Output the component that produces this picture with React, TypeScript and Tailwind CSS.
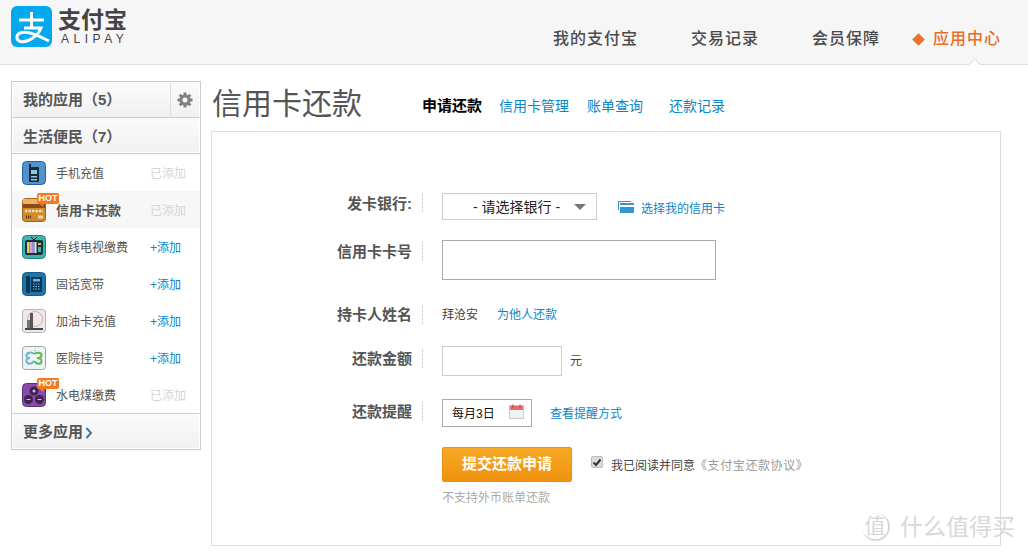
import React from "react";

const FONT = { fontFamily: '"Liberation Sans", "Noto Sans CJK SC", sans-serif' };

const navItems = ["我的支付宝", "交易记录", "会员保障"];

// sidebar app list: added = already on the user's list
const apps = [
  { name: "手机充值", added: true, icon: "phone" },
  { name: "信用卡还款", added: true, icon: "card", hot: true, active: true },
  { name: "有线电视缴费", added: false, icon: "tv" },
  { name: "固话宽带", added: false, icon: "tel" },
  { name: "加油卡充值", added: false, icon: "oil" },
  { name: "医院挂号", added: false, icon: "hospital" },
  { name: "水电煤缴费", added: true, icon: "water", hot: true },
];

const AlipayLogo = () => (
  <svg width="41" height="41" viewBox="0 0 41 41" className="shrink-0">
    <rect width="41" height="41" rx="6" fill="#04a8ee" />
    <path d="M8 14H33M20.500 6V22M13 22H30C27 30 17 37 9.500 35.500C4.500 34 4.500 28 11 26.500C18 25 28 30 38 35" fill="none" stroke="#fff" strokeWidth="3" />
  </svg>
);

const AppIcon = ({ kind }: { kind: string }) => {
  if (kind === "phone")
    return (
      <svg width="24" height="24" viewBox="0 0 24 24">
        <rect x="0.500" y="0.500" width="23" height="23" rx="4" fill="#4f94cf" stroke="#2c5f9a" />
        <rect x="7" y="3" width="2" height="4" fill="#1d2a3a" />
        <rect x="7" y="6" width="10" height="15" rx="1" fill="#1d2a3a" />
        <rect x="9" y="9" width="6" height="4" fill="#8fc6e6" />
        <rect x="9" y="15" width="6" height="1.500" fill="#8fc6e6" />
        <rect x="9" y="18" width="6" height="1.500" fill="#8fc6e6" />
      </svg>
    );
  if (kind === "card")
    return (
      <svg width="24" height="24" viewBox="0 0 24 24">
        <rect x="0.500" y="0.500" width="23" height="23" rx="3" fill="#d08a30" stroke="#a3651d" />
        <rect x="1" y="1" width="22" height="5" fill="#e8b565" />
        <rect x="1" y="6" width="22" height="4" fill="#8a4a1c" />
        <path d="M3 13H21" stroke="#f4dfae" strokeWidth="2.500" strokeDasharray="2.500 1" />
        <path d="M4 19H10" stroke="#5a2f10" strokeWidth="3" strokeDasharray="1 1" />
        <rect x="16" y="17.500" width="5" height="3" fill="#edd9a5" />
      </svg>
    );
  if (kind === "tv")
    return (
      <svg width="24" height="24" viewBox="0 0 24 24">
        <rect x="0.500" y="0.500" width="23" height="23" rx="4" fill="#3fb3b0" stroke="#1f7d80" />
        <path d="M9 2L12 5L15 2" fill="none" stroke="#123" strokeWidth="1" />
        <rect x="3" y="5" width="18" height="15" rx="2" fill="#17323a" />
        <rect x="5" y="7" width="2.500" height="11" fill="#c9e265" />
        <rect x="7.500" y="7" width="2.500" height="11" fill="#e59ac9" />
        <rect x="10" y="7" width="2.500" height="11" fill="#a58be0" />
        <rect x="12.500" y="7" width="2" height="11" fill="#e8e8e8" />
        <rect x="16" y="8" width="3" height="2" fill="#e0c14a" />
        <rect x="16" y="12" width="3" height="5" fill="#3fb3b0" />
      </svg>
    );
  if (kind === "tel")
    return (
      <svg width="24" height="24" viewBox="0 0 24 24">
        <rect x="0.500" y="0.500" width="23" height="23" rx="4" fill="#1f74a8" stroke="#165a86" />
        <rect x="4" y="4" width="4" height="17" rx="1" fill="#0f3554" />
        <rect x="9" y="5" width="11" height="15" fill="#0f3554" />
        <rect x="11" y="7" width="7" height="2.500" fill="#6db7de" />
        <path d="M11 12H18M11 14.500H18M11 17H18" stroke="#6db7de" strokeWidth="1.200" strokeDasharray="1.500 1" />
      </svg>
    );
  if (kind === "oil")
    return (
      <svg width="24" height="24" viewBox="0 0 24 24">
        <rect x="0.500" y="0.500" width="23" height="23" rx="3" fill="#f0e8e8" stroke="#a8b4be" />
        <circle cx="13" cy="10" r="7.500" fill="none" stroke="#d39a9a" strokeWidth="0.800" />
        <rect x="8" y="4" width="3" height="15" fill="#5a5454" />
        <rect x="5" y="11" width="3" height="8" fill="#77706f" />
        <rect x="3" y="19" width="18" height="2" fill="#4a4545" />
      </svg>
    );
  if (kind === "hospital")
    return (
      <svg width="24" height="24" viewBox="0 0 24 24">
        <rect x="0.500" y="0.500" width="23" height="23" rx="3" fill="#eef3f3" stroke="#9aa4ae" />
        <path d="M12 8C9 5 4 7 4.500 10.500C5 12 7 12 8 12C6 12 4 13 4.500 15.500C5.500 19 10 18 12 15" fill="none" stroke="#6fb3d8" strokeWidth="2" />
        <path d="M12 8C15 6 20 6 19.500 10C19 12 17 12 15 12C17 12 20 13 19.500 15.500C19 19 14 18 12 15" fill="none" stroke="#5cb85c" strokeWidth="2" />
        <circle cx="13" cy="4.500" r="1" fill="#9ccf9c" />
      </svg>
    );
  return (
    <svg width="24" height="24" viewBox="0 0 24 24">
      <rect x="0.500" y="0.500" width="23" height="23" rx="4" fill="#8a4aa8" stroke="#5e2d7a" />
      <circle cx="12" cy="8" r="4.500" fill="#3f2450" />
      <circle cx="6.500" cy="16.500" r="4.500" fill="#3f2450" />
      <circle cx="17.500" cy="16.500" r="4.500" fill="#3f2450" />
      <circle cx="12" cy="8" r="1.500" fill="#d9b8e6" />
      <path d="M4.500 16.500H8.500M15.500 16.500H19.500" stroke="#d9b8e6" strokeWidth="1.200" />
    </svg>
  );
};

const HotBadge = () => (
  <span className="absolute left-[15px] top-[-5px] flex h-[11px] w-[22px] items-center justify-center rounded-[2px] bg-[#f5791f] text-[9px] font-bold leading-none text-white">
    HOT
    <span className="absolute left-[2px] top-[10px] h-0 w-0 border-l-[4px] border-r-[1px] border-t-[4px] border-l-transparent border-r-transparent border-t-[#f5791f]" />
  </span>
);

const GearIcon = () => (
  <svg width="16" height="16" viewBox="0 0 16 16">
    <path d="M8 0.500V15.500M0.500 8H15.500M2.700 2.700L13.300 13.300M13.300 2.700L2.700 13.300" stroke="#808080" strokeWidth="3" />
    <circle cx="8" cy="8" r="5.500" fill="#808080" />
    <circle cx="8" cy="8" r="2.500" fill="#f5f5f5" />
  </svg>
);

const Sidebar = () => (
  <aside className="w-[190px] shrink-0 border border-[#ccc] text-[#555]">
    <div className="flex h-[35px] border border-white border-b-[#f0f0f0] bg-gradient-to-b from-[#fbfbfb] to-[#f1f1f1]">
      <div className="flex-1 pl-[10px] text-[15px] font-bold leading-[34px]">我的应用（5）</div>
      <div className="flex w-[29px] items-center justify-center border-l border-[#ddd]">
        <GearIcon />
      </div>
    </div>
    <div className="h-[36px] border border-white border-t-[#ccc] bg-gradient-to-b from-[#fbfbfb] to-[#f1f1f1] pl-[10px] pt-[2px] text-[15px] font-bold leading-[34px]">
      生活便民（7）
    </div>
    <ul className="border-t border-[#ccc]">
      {apps.map((app) => (
        <li key={app.name} className={`relative flex h-[37px] items-center pl-[10px] text-[12px] ${app.active ? "bg-[#f7f7f7]" : ""}`}>
          <span className="relative flex h-[24px] w-[24px] shrink-0">
            <AppIcon kind={app.icon} />
            {app.hot && <HotBadge />}
          </span>
          <span className={`ml-[10px] mt-[2px] w-[94px] ${app.active ? "text-[13px] font-bold" : ""}`}>{app.name}</span>
          {app.added ? (
            <span className="mt-[2px] text-[#d5d5d5]">已添加</span>
          ) : (
            <span className="mt-[2px] text-[#0a85c8]">+添加</span>
          )}
        </li>
      ))}
    </ul>
    <div className="flex h-[36px] items-center border border-white border-t-[#ccc] bg-gradient-to-b from-[#fbfbfb] to-[#f1f1f1] pl-[10px] pt-[3px] text-[15px] font-bold">
      更多应用
      <svg width="8" height="12" viewBox="0 0 8 12" className="ml-[2px]">
        <path d="M1.500 1L6 6L1.500 11" fill="none" stroke="#3f78a8" strokeWidth="2" />
      </svg>
    </div>
  </aside>
);

const FormRow = ({ label, className, children }: { label: string; className: string; children: React.ReactNode }) => (
  <div className={`flex ${className}`}>
    <div className="flex h-[20px] w-[200px] justify-end text-[15px] font-bold leading-[20px] text-[#555]">{label}</div>
    <span className="ml-[10px] mr-[19px] h-[19px] border-l border-dotted border-[#bbb]" />
    {children}
  </div>
);

const App = () => (
  <div className="relative h-[554px] w-[1028px] overflow-hidden bg-white [text-spacing-trim:space-all]" style={FONT}>
    <header className="relative flex h-[65px] items-start justify-between border-b border-[#ddd] bg-[#f6f6f6] pl-[11px] pr-[27px]">
      <div className="mt-[6px] flex items-center">
        <AlipayLogo />
        <div className="ml-[6px] flex flex-col">
          <span className="text-[23px] font-bold leading-[24px] text-[#444]">支付宝</span>
          <span className="ml-[3px] text-[12px] font-medium leading-[14px] tracking-[4.500px] text-[#444]">ALIPAY</span>
        </div>
      </div>
      <nav className="mt-[28px] flex items-center text-[16px] font-medium leading-[22px] tracking-[1px] text-[#4a4a4a]">
        {navItems.map((item) => (
          <span key={item} className="mr-[53px]">
            {item}
          </span>
        ))}
        <span className="-ml-[19px] mr-[10px] h-[9px] w-[9px] rotate-45 bg-[#ec7323]" />
        <span className="text-[#ec6c1f]">应用中心</span>
      </nav>
      <span className="absolute bottom-[-5px] right-[49px] h-[9px] w-[9px] rotate-45 border-l border-t border-[#ddd] bg-white" />
    </header>

    <div className="flex items-start pl-[11px] pt-[16px]">
      <Sidebar />
      <main className="ml-[10px] w-[790px]">
        <div className="flex h-[50px] items-start">
          <h1 className="ml-[1px] w-[210px] text-[30px] font-normal leading-[46px] text-[#555]">信用卡还款</h1>
          <div className="mt-[14px] flex text-[14px] leading-[22px] text-[#0a85c8]">
            <span className="mr-[17px] text-[15px] font-bold text-black">申请还款</span>
            <span className="mr-[18px]">信用卡管理</span>
            <span className="mr-[26px]">账单查询</span>
            <span>还款记录</span>
          </div>
        </div>
        <section className="h-[415px] border border-[#ddd] pt-[61px]">
          <FormRow label="发卡银行:" className="h-[47px] [&>div:first-child]:mt-[1px]">
            <div className="flex h-[27px] w-[155px] items-center border border-[#ccc] pl-[30px] pt-[1px] text-[14px] text-[#222]">
              - 请选择银行 -
              <span className="ml-[14px] h-0 w-0 border-l-[6px] border-r-[6px] border-t-[6px] border-l-transparent border-r-transparent border-t-[#777]" />
            </div>
            <svg width="16" height="12" viewBox="0 0 16 12" className="ml-[21px] mt-[8px]">
              <path d="M0 0H13V1H1V9H0Z" fill="#3498cf" />
              <rect x="2" y="2" width="14" height="10" fill="#3498cf" />
              <rect x="2" y="4" width="14" height="2" fill="#fff" />
            </svg>
            <span className="ml-[7px] mt-[6px] text-[12px] leading-[20px] text-[#0a85c8]">选择我的信用卡</span>
          </FormRow>
          <FormRow label="信用卡卡号" className="h-[65px] pt-[2px]">
            <div className="-mt-[2px] h-[40px] w-[274px] border border-[#aaa]" />
          </FormRow>
          <FormRow label="持卡人姓名" className="h-[41px]">
            <span className="text-[12px] leading-[20px] text-[#444]">拜沧安</span>
            <span className="ml-[19px] text-[12px] leading-[20px] text-[#0a85c8]">为他人还款</span>
          </FormRow>
          <FormRow label="还款金额" className="h-[53px] pt-[3px]">
            <div className="-mt-[3px] h-[30px] w-[120px] border border-[#ccc]" />
            <span className="ml-[8px] mt-[2px] text-[12px] leading-[20px] text-[#444]">元</span>
          </FormRow>
          <FormRow label="还款提醒" className="h-[48px] pt-[3px]">
            <div className="-mt-[3px] flex h-[28px] w-[90px] items-center border border-[#aaa] pl-[9px] pt-[1px] text-[12px] text-[#111]">
              每月3日
              <svg width="15" height="15" viewBox="0 0 15 15" className="ml-[14px] -mt-[4px]">
                <rect x="0.500" y="1.500" width="14" height="13" fill="#eef4f4" stroke="#c9c9c9" />
                <rect x="1" y="2" width="13" height="4" fill="#e86a6a" />
                <path d="M4 0.500V3.500M11 0.500V3.500" stroke="#a33" strokeWidth="1" />
              </svg>
            </div>
            <span className="ml-[18px] mt-[2px] text-[12px] leading-[20px] text-[#0a85c8]">查看提醒方式</span>
          </FormRow>
          <div className="ml-[230px] flex">
            <button className="h-[35px] w-[130px] rounded-[2px] border border-[#e8921a] bg-gradient-to-b from-[#f6a925] to-[#ef920f] text-[15px] font-bold text-white">
              提交还款申请
            </button>
            <span className="ml-[19px] mt-[9px] flex h-[12px] w-[12px] items-center justify-center rounded-[2px] border border-[#bbb] bg-[#ddd]">
              <svg width="10" height="9" viewBox="0 0 10 9">
                <path d="M1.500 4.500L4 7L8.500 1.500" fill="none" stroke="#333" strokeWidth="2" />
              </svg>
            </span>
            <span className="ml-[8px] mt-[9px] text-[12px] leading-[20px] text-[#444]">
              我已阅读并同意
              <span className="tracking-[0.600px] text-[#999]">《支付宝还款协议》</span>
            </span>
          </div>
          <p className="ml-[230px] mt-[6px] text-[12px] leading-[20px] text-[#aaa]">不支持外币账单还款</p>
        </section>
      </main>
    </div>

    {/* site watermark over the corner */}
    <div className="absolute left-[862px] top-[513px] flex items-center text-[#d8d8d8]">
      <span className="flex h-[28px] w-[28px] items-center justify-center rounded-full border-b-2 border-r-2 border-[#d8d8d8] text-[21px]">值</span>
      <span className="ml-[10px] text-[23px] leading-[28px]">什么值得买</span>
    </div>
  </div>
);

export default App;
